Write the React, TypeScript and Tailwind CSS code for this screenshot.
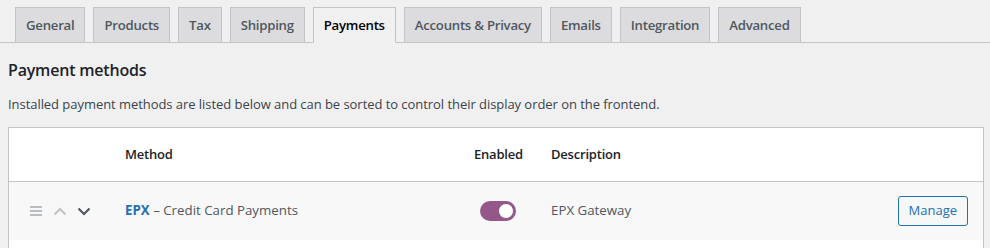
import { useState } from "react";

const tabs = [
  "General",
  "Products",
  "Tax",
  "Shipping",
  "Payments",
  "Accounts & Privacy",
  "Emails",
  "Integration",
  "Advanced",
];

const font = { fontFamily: '"Open Sans", "Noto Sans", Arial, sans-serif' };

function DragHandle() {
  return (
    <svg width="12" height="10" viewBox="0 0 12 10" className="text-[#a7aaad]">
      <path d="M0 1h12M0 5h12M0 9h12" stroke="currentColor" strokeWidth="1.4" />
    </svg>
  );
}

function Chevron({ up, color }: { up?: boolean; color: string }) {
  return (
    <svg width="14" height="9" viewBox="0 0 14 9">
      <path
        d={up ? "M1.5 7.5L7 2l5.5 5.5" : "M1.5 1.5L7 7l5.5-5.5"}
        fill="none"
        stroke={color}
        strokeWidth="2.2"
      />
    </svg>
  );
}

export default function App() {
  const [active, setActive] = useState("Payments");
  const [enabled, setEnabled] = useState(true);

  return (
    <div className="min-h-[248px] w-[990px] bg-[#f0f0f1] text-[#3c434a]" style={font}>
      {/* tabs */}
      <nav className="flex gap-[8px] border-b border-[#c3c4c7] pl-[15px] pt-[7px]">
        {tabs.map((t) => {
          const on = t === active;
          return (
            <button
              key={t}
              onClick={() => setActive(t)}
              className={
                "-mb-px h-[36px] border px-[10px] pt-[1px] text-[13.2px] font-semibold tracking-[-0.25px] " +
                (on
                  ? "border-[#c3c4c7] border-b-[#f0f0f1] bg-[#f0f0f1] text-black"
                  : "border-[#c3c4c7] bg-[#dcdcde] text-[#50575e]")
              }
            >
              {t}
            </button>
          );
        })}
      </nav>

      <div className="pl-2 pr-[6px]">
        <h2 className="mt-[14px] text-[16px] font-semibold leading-[26px] tracking-[-0.2px] text-[#1d2327]">
          Payment methods
        </h2>
        <p className="mt-[12px] text-[13px] leading-[18px] tracking-[-0.05px] text-[#3c434a]">
          Installed payment methods are listed below and can be sorted to control their display order on the frontend.
        </p>

        {/* table */}
        <div className="mt-[14px] border border-b-0 border-[#c3c4c7] bg-white">
          <div className="flex h-[54px] items-center border-b border-[#c3c4c7] text-[13px] font-semibold tracking-[-0.2px] text-[#1d2327]">
            <div className="w-[116px]" />
            <div className="w-[349px]">Method</div>
            <div className="w-[77px]">Enabled</div>
            <div>Description</div>
          </div>
          <div className="flex h-[58px] items-center bg-[#f8f8f8] text-[13.3px]">
            <div className="flex w-[116px] items-center pl-[21px]">
              <DragHandle />
              <span className="ml-[11px] flex">
                <Chevron up color="#c3c4c7" />
              </span>
              <span className="ml-[10px] flex">
                <Chevron color="#50575e" />
              </span>
            </div>
            <div className="w-[349px] text-[#50575e]">
              <a className="font-bold text-[#2271b1]">EPX</a> – Credit Card Payments
            </div>
            <div className="w-[77px] pl-[6px]">
              <button
                onClick={() => setEnabled(!enabled)}
                className={
                  "flex h-[20px] w-[36px] items-center rounded-full px-[2px] " +
                  (enabled ? "justify-end bg-[#935889]" : "justify-start bg-[#c3c4c7]")
                }
              >
                <span className="h-[16px] w-[16px] rounded-full border border-[#935889] bg-white" />
              </button>
            </div>
            <div className="flex-1 text-[#50575e]">EPX Gateway</div>
            <button className="mr-[15px] h-[30px] rounded-[3px] border border-[#2271b1] bg-[#f6f7f7] px-[10px] text-[13px] text-[#2271b1]">
              Manage
            </button>
          </div>
          <div className="h-[10px] bg-white" />
        </div>
      </div>
    </div>
  );
}
